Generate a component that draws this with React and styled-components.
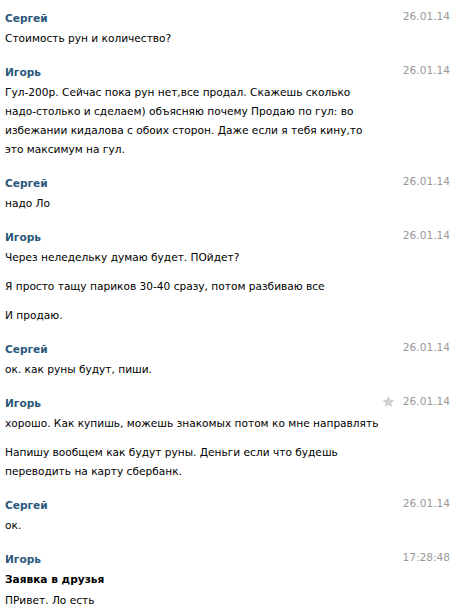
import React from "react";
import styled, { createGlobalStyle } from "styled-components";

const GlobalStyle = createGlobalStyle`
  body {
    margin: 0;
    background: #fff;
    font-family: "DejaVu Sans", Tahoma, sans-serif;
    font-size: 10.6px;
    color: #000;
  }
`;

// каждая часть сообщения — массив строк, как они переносятся на экране
const messages = [
  { author: "Сергей", date: "26.01.14", parts: [["Стоимость рун и количество?"]] },
  {
    author: "Игорь",
    date: "26.01.14",
    parts: [
      [
        "Гул-200р. Сейчас пока рун нет,все продал. Скажешь сколько",
        "надо-столько и сделаем) объясняю почему Продаю по гул: во",
        "избежании кидалова с обоих сторон. Даже если я тебя кину,то",
        "это максимум на гул.",
      ],
    ],
  },
  { author: "Сергей", date: "26.01.14", parts: [["надо Ло"]] },
  {
    author: "Игорь",
    date: "26.01.14",
    parts: [
      ["Через неледельку думаю будет. ПОйдет?"],
      ["Я просто тащу париков 30-40 сразу, потом разбиваю все"],
      ["И продаю."],
    ],
  },
  { author: "Сергей", date: "26.01.14", parts: [["ок. как руны будут, пиши."]] },
  {
    author: "Игорь",
    date: "26.01.14",
    starred: true,
    parts: [
      ["хорошо. Как купишь, можешь знакомых потом ко мне направлять"],
      [
        "Напишу вообщем как будут руны. Деньги если что будешь",
        "переводить на карту сбербанк.",
      ],
    ],
  },
  { author: "Сергей", date: "26.01.14", parts: [["ок."]] },
  {
    author: "Игорь",
    date: "17:28:48",
    title: "Заявка в друзья",
    parts: [["ПРивет. Ло есть"]],
  },
];

function Star() {
  return (
    <svg width="13" height="13" viewBox="0 0 24 24">
      <path
        d="M12 1.5l3.2 7.1 7.6.8-5.7 5.2 1.6 7.6L12 18.3l-6.7 3.9 1.6-7.6-5.7-5.2 7.6-.8z"
        fill="#cfcfcf"
      />
    </svg>
  );
}

export default function App() {
  return (
    <>
      <GlobalStyle />
      <StList>
        {messages.map((m, i) => (
          <StMessage key={i}>
            <StHead>
              <StAuthor>{m.author}</StAuthor>
              <StMeta>
                {m.starred && <Star />}
                <StDate>{m.date}</StDate>
              </StMeta>
            </StHead>
            <StBody>
              {m.title && <StTitle>{m.title}</StTitle>}
              {m.parts.map((lines, j) => (
                <StText key={j}>
                  {lines.map((line, k) => (
                    <React.Fragment key={k}>
                      {k > 0 && <br />}
                      {line}
                    </React.Fragment>
                  ))}
                </StText>
              ))}
            </StBody>
          </StMessage>
        ))}
      </StList>
    </>
  );
}

const StList = styled.div`
  width: 460px;
  padding: 8px 10px 0 5px;
  box-sizing: border-box;
`;

const StMessage = styled.div`
  padding-bottom: 14px;
`;

const StHead = styled.div`
  display: flex;
  justify-content: space-between;
  align-items: flex-start;
  height: 21px;
`;

const StAuthor = styled.span`
  font-weight: bold;
  color: #2b587a;
  line-height: 21px;
`;

const StMeta = styled.div`
  display: flex;
  align-items: center;
  gap: 8px;
  margin-top: -2px;
  line-height: 21px;
`;

const StDate = styled.span`
  color: #999;
`;

const StBody = styled.div`
  display: flex;
  flex-direction: column;
  gap: 10px;
  white-space: nowrap;
`;

const StText = styled.p`
  margin: 0;
  line-height: 19px;
`;

const StTitle = styled.p`
  margin: 0 0 -8px;
  font-weight: bold;
  line-height: 19px;
`;
